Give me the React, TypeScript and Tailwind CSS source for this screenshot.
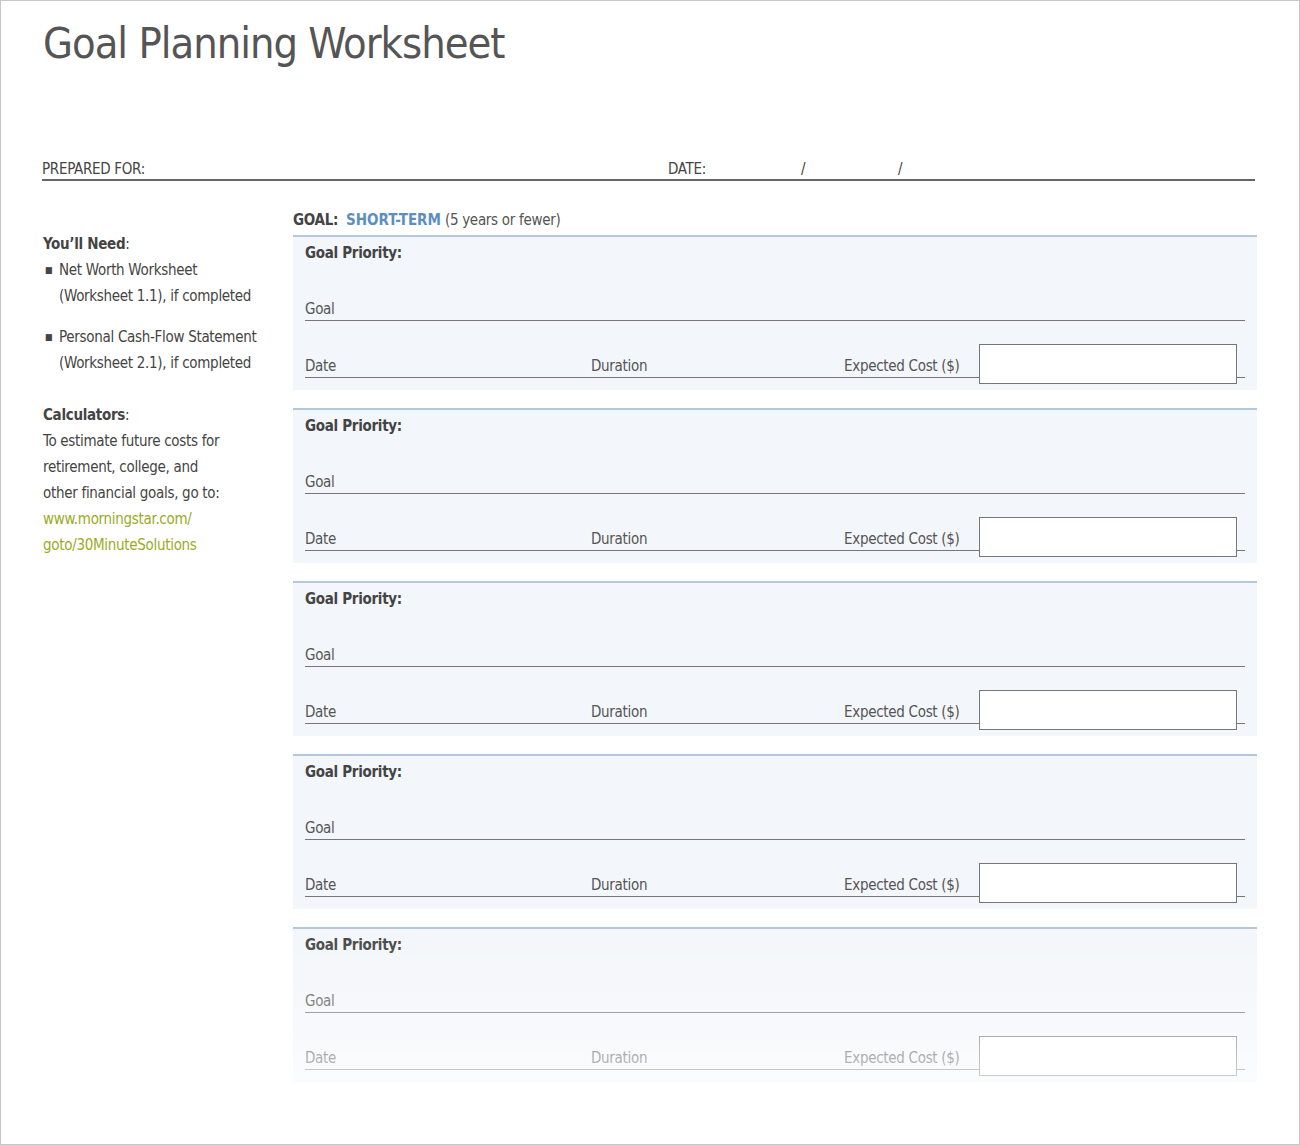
import React from "react";

const F = { fontFamily: '"DejaVu Sans Condensed","Liberation Sans Narrow","Roboto",sans-serif' };

function Card({ faded }: { faded?: boolean }) {
  return (
    <div className="relative h-[155px] border-t-2 border-[#b3c8dc] bg-[#f3f6fa] pl-3 pr-3 pt-[6px]">
      <div className="text-[15px] font-bold text-[#444] leading-[20px] tracking-[-0.3px]">Goal Priority:</div>
      <div className="mt-[27px] flex h-[31px] items-end border-b border-[#777] text-[15px] text-[#555] leading-[20px] tracking-[-0.3px] pb-[1px]">Goal</div>
      <div className="mt-[23px] flex h-[40px] items-start">
        <div className="flex h-[34px] flex-1 items-end border-b border-[#777] text-[15px] text-[#555] leading-[20px] tracking-[-0.3px] pb-[1px]">
          <span className="w-[286px]">Date</span>
          <span className="w-[253px]">Duration</span>
          <span>Expected Cost ($)</span>
        </div>
        <div className="h-[40px] w-[258px] border border-[#777] bg-white" />
        <div className="h-[34px] w-[8px] border-b border-[#777]" />
      </div>
      {faded && (
        <div className="absolute inset-x-0 top-[0px] bottom-[-60px] bg-gradient-to-b from-white/0 via-white/40 to-white" />
      )}
    </div>
  );
}

export default function App() {
  return (
    <div style={F} className="h-[1145px] w-[1300px] overflow-hidden border border-[#c8c8c8] bg-white text-[#444]">
      <h1 className="ml-[42px] mt-[14px] text-[43px] leading-[56px] text-[#555] tracking-[-1px]">Goal Planning Worksheet</h1>
      <div className="mt-[87px] flex h-[23px] items-start border-b-2 border-[#666] text-[15px] text-[#444] tracking-[-0.3px] ml-[41px] mr-[44px]">
        <span className="w-[626px]">PREPARED FOR:</span>
        <span className="w-[133px]">DATE:</span>
        <span className="w-[97px]">/</span>
        <span>/</span>
      </div>
      <div className="mt-[28px] flex">
        <div className="ml-[42px] w-[250px] text-[15px] leading-[26px] text-[#444] tracking-[-0.3px] pt-[22px]">
          <div><b>You’ll Need</b>:</div>
          <div className="flex"><span className="w-[16px] text-[9px] pl-[2px]">■</span><span>Net Worth Worksheet<br />(Worksheet 1.1), if completed</span></div>
          <div className="mt-[15px] flex"><span className="w-[16px] text-[9px] pl-[2px]">■</span><span>Personal Cash-Flow Statement<br />(Worksheet 2.1), if completed</span></div>
          <div className="mt-[26px]"><b>Calculators</b>:</div>
          <div>To estimate future costs for<br />retirement, college, and<br />other financial goals, go to:</div>
          <div className="text-[#9aab1e]">www.morningstar.com/<br />goto/30MinuteSolutions</div>
        </div>
        <div className="w-[964px]">
          <div className="h-[26px] text-[15px] tracking-[-0.3px]">
            <b className="text-[#444]">GOAL:</b>{" "}
            <b className="ml-[4px] text-[#5b8fc2] tracking-normal">SHORT-TERM</b>{" "}
            <span className="text-[#555]">(5 years or fewer)</span>
          </div>
          <div className="flex flex-col gap-[18px]">
            <Card />
            <Card />
            <Card />
            <Card />
            <Card faded />
          </div>
        </div>
      </div>
    </div>
  );
}
